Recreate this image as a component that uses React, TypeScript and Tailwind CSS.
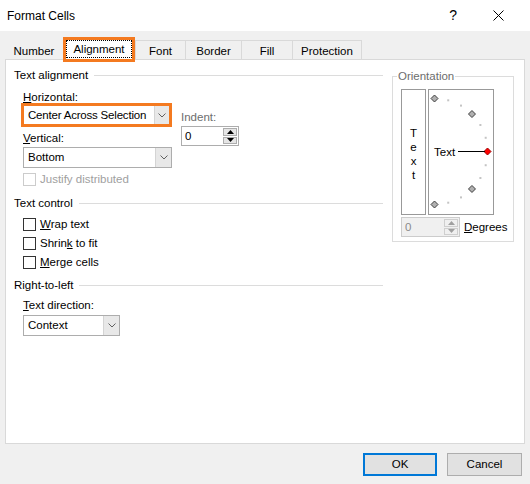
import React from 'react';

const Chevron = () => (
  <svg width="8" height="5" viewBox="0 0 8 5">
    <polyline points="0.5,0.5 4,4 7.5,0.5" fill="none" stroke="#606060" strokeWidth="1" />
  </svg>
);

const SpinButtons = ({ disabled }: { disabled?: boolean }) => (
  <div className="flex w-[16px] flex-col gap-[1px] p-[1px]">
    <div className={`flex flex-1 items-center justify-center border ${disabled ? 'border-[#cfcfcf] bg-[#f0f0f0]' : 'border-[#adadad] bg-[#e5e5e5]'}`}>
      <svg width="7" height="4" viewBox="0 0 7 4">
        <polygon points="3.5,0 7,4 0,4" fill={disabled ? '#a0a0a0' : '#000'} />
      </svg>
    </div>
    <div className={`flex flex-1 items-center justify-center border ${disabled ? 'border-[#cfcfcf] bg-[#f0f0f0]' : 'border-[#adadad] bg-[#e5e5e5]'}`}>
      <svg width="7" height="4" viewBox="0 0 7 4">
        <polygon points="0,0 7,0 3.5,4" fill={disabled ? '#a0a0a0' : '#000'} />
      </svg>
    </div>
  </div>
);

const Combo = ({ value, className }: { value: string; className: string }) => (
  <div className={`flex h-[21px] border border-[#adadad] bg-white ${className}`}>
    <div className="flex flex-1 items-center pl-[4px] pt-[1px]">{value}</div>
    <div className="flex w-[16px] items-center justify-center border-l border-[#d4d4d4] bg-[#e8e8e8]">
      <Chevron />
    </div>
  </div>
);

const GroupHeader = ({ title }: { title: string }) => (
  <div className="flex h-[15px] items-center">
    <span className="pt-[1px]">{title}</span>
    <div className="ml-[6px] h-px flex-1 bg-[#dcdcdc]" />
  </div>
);

const Check = ({ label, disabled }: { label: React.ReactNode; disabled?: boolean }) => (
  <div className="flex h-[19px] items-center">
    <div className={`h-[13px] w-[13px] border bg-white ${disabled ? 'border-[#cccccc]' : 'border-[#333333]'}`} />
    <span className={`ml-[4px] ${disabled ? 'text-[#a0a0a0]' : ''}`}>{label}</span>
  </div>
);

const Tab = ({ label, className }: { label: string; className: string }) => (
  <div className={`flex h-[19px] items-center justify-center border-t border-[#d9d9d9] pt-[4px] ${className}`}>
    {label}
  </div>
);

// angles of the orientation dial, every 15 degrees from top to bottom
const DIAL = Array.from({ length: 13 }, (_, i) => 90 - i * 15);

const Dial = () => (
  <div className="relative h-[126px] w-[66px] border border-[#999999] bg-white">
    <svg className="absolute left-0 top-0" width="64" height="124" viewBox="0 0 64 124">
      {DIAL.map((a) => {
        const r = (a * Math.PI) / 180;
        const x = 5.5 + 53 * Math.cos(r);
        const y = 61.5 - 53 * Math.sin(r);
        if (a % 45 === 0) {
          const red = a === 0;
          return (
            <polygon
              key={a}
              points={`${x},${y - 3.5} ${x + 3.5},${y} ${x},${y + 3.5} ${x - 3.5},${y}`}
              fill={red ? '#ff0000' : '#b0b0b0'}
              stroke={red ? '#a00000' : '#404040'}
              strokeWidth="1"
            />
          );
        }
        return <rect key={a} x={x - 1} y={y - 1} width="2" height="2" fill="#c4c4c4" />;
      })}
      <line x1="29" y1="61.5" x2="56" y2="61.5" stroke="#000" strokeWidth="1" />
    </svg>
    <span className="absolute left-[5px] top-[55px] leading-[15px]">Text</span>
  </div>
);

const App: React.FC = () => {
  return (
    <div className="flex h-[484px] w-[530px] flex-col bg-[#f0f0f0] font-['Liberation_Sans',Arial,sans-serif] text-[11.5px] text-black">
      {/* Title bar */}
      <div className="flex h-[31px] items-center bg-white pl-[7px]">
        <span className="flex-1 pt-[1px] text-[12px]">Format Cells</span>
        <span className="mr-[36px] text-[14px]">?</span>
        <svg className="mr-[26px]" width="11" height="11" viewBox="0 0 11 11">
          <path d="M0.5 0.5 L10.5 10.5 M10.5 0.5 L0.5 10.5" stroke="#000" strokeWidth="1" />
        </svg>
      </div>

      {/* Tabs */}
      <div className="mt-[6px] flex h-[22px] items-end pl-[5px]">
        <Tab label="Number" className="w-[58px] border-transparent" />
        <div className="relative z-10 -mb-[3px] flex h-[25px] w-[72px] items-start border-[3px] border-[#f47a20] bg-white">
          <div className="flex h-[18px] w-full items-center justify-center border border-dotted border-black pt-[2px]">
            Alignment
          </div>
        </div>
        <Tab label="Font" className="w-[50px] border-l" />
        <Tab label="Border" className="w-[56px] border-l" />
        <Tab label="Fill" className="w-[51px] border-l" />
        <Tab label="Protection" className="w-[70px] border-x" />
      </div>

      {/* Panel */}
      <div className="mx-[5px] flex h-[385px] border border-[#d9d9d9] bg-white pl-[8px] pt-[8px]">
        <div className="flex w-[369px] flex-col">
          <GroupHeader title="Text alignment" />
          <div className="ml-[9px] flex">
            <div className="flex flex-col">
              <div className="mt-[6px] flex h-[14px] items-center pt-[3px]">
                <span><span className="underline">H</span>orizontal:</span>
              </div>
              <div className="-ml-[2px] flex h-[24px] w-[151px] border-[3px] border-[#f47a20] bg-white">
                <div className="flex flex-1 items-center pl-[4px] pt-[1px] tracking-[-0.2px]">Center Across Selection</div>
                <div className="flex w-[15px] items-center justify-center border-l border-[#d4d4d4] bg-[#e8e8e8]">
                  <Chevron />
                </div>
              </div>
              <div className="mt-[3px] flex h-[14px] items-center pt-[3px]">
                <span><span className="underline">V</span>ertical:</span>
              </div>
              <Combo value="Bottom" className="mt-[3px] w-[149px]" />
            </div>
            <div className="ml-[9px] flex flex-col">
              <div className="mt-[27px] flex h-[14px] items-center pt-[2px] text-[#6d6d6d]">Indent:</div>
              <div className="mt-[2px] flex h-[20px] w-[58px] border border-[#adadad] bg-white">
                <div className="flex flex-1 items-center pl-[3px] pt-[1px]">0</div>
                <SpinButtons />
              </div>
            </div>
          </div>
          <div className="ml-[9px] mt-[2px]">
            <Check label="Justify distributed" disabled />
          </div>

          <div className="mt-[7px]">
            <GroupHeader title="Text control" />
          </div>
          <div className="ml-[9px] mt-[4px] flex flex-col">
            <Check label={<><span className="underline">W</span>rap text</>} />
            <Check label={<>Shrin<span className="underline">k</span> to fit</>} />
            <Check label={<><span className="underline">M</span>erge cells</>} />
          </div>

          <div className="mt-[6px]">
            <GroupHeader title="Right-to-left" />
          </div>
          <div className="ml-[9px] mt-[5px] flex h-[14px] items-center pt-[2px]">
            <span><span className="underline">T</span>ext direction:</span>
          </div>
          <Combo value="Context" className="ml-[9px] mt-[3px] w-[97px]" />
        </div>

        {/* Orientation */}
        <div className="relative ml-[9px] mt-[8px] flex h-[166px] w-[122px] flex-col self-start border border-[#dcdcdc] pl-[8px] pt-[12px]">
          <span className="absolute -top-[8px] left-[4px] bg-white px-[1px] leading-[15px] text-[#6d6d6d]">
            Orientation
          </span>
          <div className="flex gap-[2px]">
            <div className="flex h-[126px] w-[25px] flex-col items-center justify-center border border-[#999999] bg-white pt-[3px] leading-[14px]">
              <span>T</span>
              <span>e</span>
              <span>x</span>
              <span>t</span>
            </div>
            <Dial />
          </div>
          <div className="mt-[2px] flex items-center">
            <div className="flex h-[20px] w-[59px] border border-[#cccccc] bg-[#f0f0f0]">
              <div className="flex flex-1 items-center pl-[3px] pt-[1px] text-[#8a8a8a]">0</div>
              <SpinButtons disabled />
            </div>
            <span className="ml-[4px] pt-[1px]"><span className="underline">D</span>egrees</span>
          </div>
        </div>
      </div>

      {/* Footer buttons */}
      <div className="mt-[9px] flex justify-end gap-[10px] pr-[8px]">
        <button className="flex h-[23px] w-[74px] items-center justify-center border-2 border-[#0078d7] bg-[#e1e1e1] pt-[1px]">
          OK
        </button>
        <button className="flex h-[23px] w-[75px] items-center justify-center border border-[#adadad] bg-[#e1e1e1] pt-[1px]">
          Cancel
        </button>
      </div>
    </div>
  );
};

export default App;
